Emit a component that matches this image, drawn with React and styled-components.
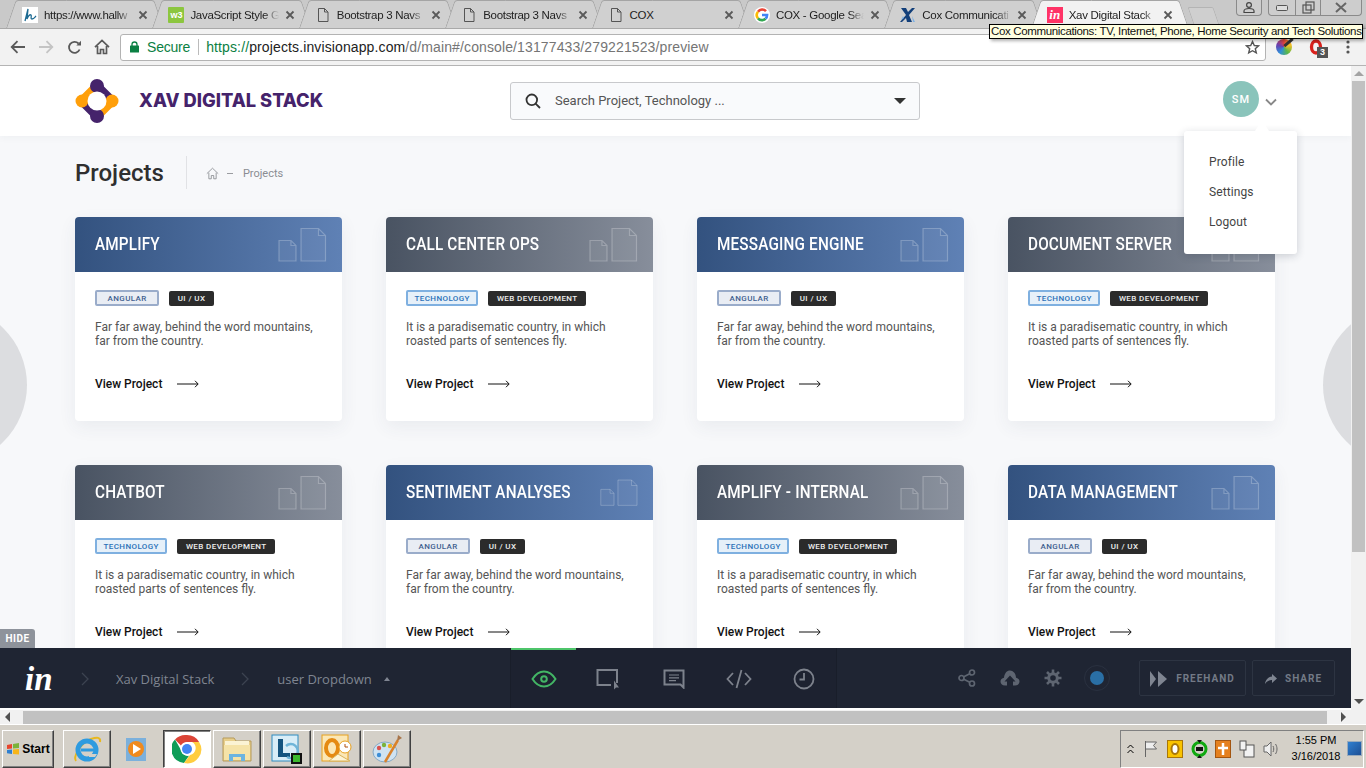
import styled, { createGlobalStyle } from 'styled-components';

const GlobalStyle = createGlobalStyle`
  html, body, #root { margin: 0; padding: 0; height: 100%; }
  body { overflow: hidden; font-family: Roboto, "Liberation Sans", sans-serif; background: #d4d0c8; }
  * { box-sizing: border-box; }
`;

const UI_FONT = `"Liberation Sans", "Open Sans", sans-serif`;

const TABS = [
  { title: 'https://www.hallw', icon: 'hallway' },
  { title: 'JavaScript Style G', icon: 'w3' },
  { title: 'Bootstrap 3 Navs', icon: 'doc' },
  { title: 'Bootstrap 3 Navs', icon: 'doc' },
  { title: 'COX', icon: 'doc', plain: true },
  { title: 'COX - Google Sea', icon: 'google' },
  { title: 'Cox Communicati', icon: 'cox' },
  { title: 'Xav Digital Stack', icon: 'invision', active: true },
];

const ANGULAR = ['ANGULAR', 'UI / UX'];
const TECH = ['TECHNOLOGY', 'WEB DEVELOPMENT'];
const FAR = ['Far far away, behind the word mountains,', 'far from the country.'];
const PARA = ['It is a paradisematic country, in which', 'roasted parts of sentences fly.'];

const CARDS = [
  { title: 'AMPLIFY', blue: true },
  { title: 'CALL CENTER OPS' },
  { title: 'MESSAGING ENGINE', blue: true },
  { title: 'DOCUMENT SERVER' },
  { title: 'CHATBOT' },
  { title: 'SENTIMENT ANALYSES', blue: true },
  { title: 'AMPLIFY - INTERNAL' },
  { title: 'DATA MANAGEMENT', blue: true },
];

const Screen = styled.div`
  width: 1366px;
  height: 768px;
  display: flex;
  flex-direction: column;
  overflow: hidden;
  position: relative;
  background: #d4d0c8;
`;

/* browser chrome */
const TabStrip = styled.div`
  height: 28px;
  flex: none;
  display: flex;
  align-items: flex-end;
  padding-left: 6px;
  background: #c9c9c9;
  position: relative;
  font-family: ${UI_FONT};
`;

const Tab = styled.div`
  width: 158.4px;
  height: 28px;
  margin-right: -12px;
  flex: none;
  position: relative;
  display: flex;
  align-items: center;
  padding: 1px 16px 0 16px;
  isolation: isolate;
  z-index: ${p => (p.$active ? 2 : 1)};

  &::before, &::after {
    content: '';
    position: absolute;
    top: 0;
    bottom: 0;
    width: 55%;
    z-index: -1;
    border-top: 1px solid #a5a5a5;
    background: ${p => (p.$active ? '#f2f2f2' : '#d0d0d0')};
  }
  &::before {
    left: 0;
    border-left: 1px solid #a5a5a5;
    transform: skewX(-19deg);
    transform-origin: bottom left;
    border-top-left-radius: 3px;
  }
  &::after {
    right: 0;
    border-right: 1px solid #a5a5a5;
    transform: skewX(19deg);
    transform-origin: bottom right;
    border-top-right-radius: 3px;
  }
`;

const TabIcon = styled.span`
  width: 16px;
  height: 16px;
  flex: none;
  display: flex;
  align-items: center;
  justify-content: center;
  margin-right: 6px;
`;

const TabTitle = styled.span`
  flex: 1;
  min-width: 0;
  white-space: nowrap;
  font-size: 11.5px;
  letter-spacing: -0.3px;
  color: #222;
  ${p => !p.$plain && `
    -webkit-mask-image: linear-gradient(to right, #000 84%, transparent);
    mask-image: linear-gradient(to right, #000 84%, transparent);
  `}
`;

const TabClose = styled.svg`
  width: 10px;
  height: 10px;
  flex: none;
  margin-left: 6px;
`;

const NewTab = styled.div`
  width: 26px;
  height: 21px;
  margin-left: 14px;
  flex: none;
  background: #cfcfcf;
  border: 1px solid #b4b4b4;
  border-bottom: 0;
  border-radius: 2px 2px 0 0;
  transform: skewX(19deg);
`;

const WindowControls = styled.div`
  position: absolute;
  top: 0;
  right: 4px;
  display: flex;
  gap: 6px;
`;

const WinGroup = styled.div`
  height: 16px;
  display: flex;
  border: 1px solid #8a8a8a;
  border-top: 0;
  border-radius: 0 0 4px 4px;
  background: #cdcdcd;
`;

const WinBtn = styled.div`
  width: ${p => p.$w}px;
  display: flex;
  align-items: center;
  justify-content: center;
  & + & { border-left: 1px solid #8a8a8a; }
`;

const Tooltip = styled.div`
  position: absolute;
  left: 989px;
  top: 24px;
  width: 374px;
  height: 15px;
  z-index: 10;
  background: #ffffe1;
  border: 1px solid #000;
  box-shadow: 2px 2px 3px rgba(0, 0, 0, 0.3);
  font-family: ${UI_FONT};
  font-size: 11.5px;
  letter-spacing: -0.35px;
  line-height: 13px;
  padding-left: 1px;
  color: #111;
  white-space: nowrap;
`;

const Toolbar = styled.div`
  height: 38px;
  flex: none;
  display: flex;
  align-items: center;
  background: #f2f2f2;
  border-top: 1px solid #a9a9a9;
  border-bottom: 1px solid #b4b4b4;
  padding-left: 4px;
  font-family: ${UI_FONT};
`;

const NavBtn = styled.div`
  width: 28px;
  height: 20px;
  flex: none;
  display: flex;
  align-items: center;
  justify-content: center;
`;

const Omnibox = styled.div`
  width: 1146px;
  height: 27px;
  margin-left: 4px;
  flex: none;
  display: flex;
  align-items: center;
  background: #fff;
  border: 1px solid #b3b3b3;
  border-radius: 3px;
  padding: 0 5px 0 9px;
  font-size: 14px;
  white-space: nowrap;
`;

const Secure = styled.span`
  color: #0b8043;
  margin-left: 8px;
  padding-right: 8px;
  border-right: 1px solid #bbb;
  line-height: 16px;
  letter-spacing: -0.2px;
`;

const Url = styled.span`
  margin-left: 7px;
  color: #757575;
  letter-spacing: 0.12px;
  & b { font-weight: 400; color: #0b8043; }
  & i { font-style: normal; color: #222; }
`;

const StarSlot = styled.span`
  margin-left: auto;
  display: flex;
`;

const ExtBtn = styled.div`
  width: 32px;
  margin-left: ${p => p.$ml || 0}px;
  flex: none;
  display: flex;
  justify-content: center;
  position: relative;
`;

const ColorWheel = styled.div`
  width: 16px;
  height: 16px;
  border-radius: 50%;
  background: conic-gradient(#e8443a, #f6c026, #5cb947, #2f8fd8, #6a3fb0, #e8443a);
  position: relative;

  &::after {
    content: '';
    position: absolute;
    left: 7px;
    top: 2px;
    width: 11px;
    height: 3px;
    background: #333;
    transform: rotate(-40deg);
  }
`;

const Badge = styled.span`
  position: absolute;
  left: 17px;
  top: 8px;
  width: 11px;
  height: 11px;
  background: #555;
  color: #fff;
  font: 700 9px/11px ${UI_FONT};
  text-align: center;
`;

/* page */
const Middle = styled.div`
  flex: 1;
  min-height: 0;
  display: flex;
`;

const Viewport = styled.div`
  flex: 1;
  min-width: 0;
  display: flex;
  flex-direction: column;
  position: relative;
  background: #fff;
  padding-bottom: 2px;
`;

const Page = styled.div`
  flex: 1;
  min-height: 0;
  position: relative;
  overflow: hidden;
  background: #f7f8fa;
`;

const Header = styled.header`
  height: 70px;
  display: flex;
  align-items: center;
  padding: 0 74px 0 75px;
  background: #fff;
  box-shadow: 0 1px 8px rgba(40, 50, 70, 0.05);
`;

const Brand = styled.div`
  width: 435px;
  flex: none;
  display: flex;
  align-items: center;
`;

const BrandName = styled.span`
  margin: 0 0 2px 20px;
  font-family: Inter, sans-serif;
  font-weight: 800;
  font-size: 18.3px;
  color: #45236b;
`;

const SearchBox = styled.div`
  width: 410px;
  height: 38px;
  flex: none;
  display: flex;
  align-items: center;
  padding: 0 13px 0 14px;
  background: #f9fafc;
  border: 1px solid #c8c9cc;
  border-radius: 3px;
  font-size: 13px;
  color: #555;
`;

const SearchText = styled.span`
  flex: 1;
  margin: 0 0 2px 14px;
`;

const Caret = styled.span`
  width: 0;
  height: 0;
  border-left: 6px solid transparent;
  border-right: 6px solid transparent;
  border-top: 6px solid #333;
`;

const User = styled.div`
  margin-left: auto;
  display: flex;
  align-items: center;
  gap: 6px;
  & svg { margin-top: 2px; }
`;

const Avatar = styled.div`
  width: 36px;
  height: 36px;
  margin-bottom: 4px;
  border-radius: 50%;
  background: #8ac4bb;
  color: #fff;
  display: flex;
  align-items: center;
  justify-content: center;
  font-size: 11px;
  font-weight: 500;
  letter-spacing: 1px;
`;

const Dropdown = styled.div`
  position: absolute;
  left: 1184px;
  top: 65px;
  width: 113px;
  height: 123px;
  padding: 16px 25px;
  z-index: 5;
  background: #fff;
  border-radius: 3px;
  box-shadow: 0 2px 8px rgba(30, 40, 60, 0.2);

  &::before {
    content: '';
    position: absolute;
    left: 71px;
    top: -11px;
    border-left: 7px solid transparent;
    border-right: 7px solid transparent;
    border-bottom: 11px solid #fff;
  }
`;

const DropItem = styled.div`
  height: 30px;
  line-height: 30px;
  font-size: 12px;
  letter-spacing: 0.1px;
  color: #444;
`;

const Content = styled.main`
  padding: 20px 76px 0 75px;
`;

const TitleRow = styled.div`
  height: 33px;
  margin-bottom: 28px;
  display: flex;
  align-items: center;
`;

const PageTitle = styled.h1`
  margin: 0;
  padding-right: 22px;
  border-right: 1px solid #e1e2e5;
  height: 33px;
  line-height: 34px;
  font-size: 24px;
  font-weight: 500;
  color: #2f2f2f;
`;

const Crumbs = styled.div`
  margin-left: 19px;
  padding-top: 1px;
  display: flex;
  align-items: center;
  font-size: 11px;
  color: #8b8d92;
`;

const CrumbDash = styled.span`
  margin: 0 10px 0 8px;
  width: 6px;
  height: 1px;
  background: #9a9ca0;
`;

const CardGrid = styled.div`
  display: grid;
  grid-template-columns: repeat(4, 267px);
  gap: 44px;
`;

const Card = styled.article`
  height: 204px;
  background: #fff;
  border-radius: 4px;
  overflow: hidden;
  box-shadow: 0 6px 18px rgba(60, 70, 100, 0.07);
`;

const CardHead = styled.div`
  height: 55px;
  display: flex;
  justify-content: space-between;
  padding: 10px 15px 10px 20px;
  background: ${p => (p.$blue
    ? 'linear-gradient(90deg, #33527f, #5f81b5)'
    : 'linear-gradient(90deg, #495362, #878e9b)')};
`;

const CardTitle = styled.h2`
  margin: 0;
  line-height: 34px;
  font-family: Roboto, sans-serif;
  font-size: 18px;
  font-weight: 500;
  color: #fff;
  white-space: nowrap;
  transform: scaleX(0.85);
  transform-origin: left center;
  letter-spacing: 0.2px;
`;

const CardBody = styled.div`
  padding: 18px 20px 0;
`;

const Tags = styled.div`
  display: flex;
  align-items: center;
  gap: 10px;
  height: 16px;
`;

const Tag = styled.span`
  height: ${p => (p.$kind === 'dark' ? 15 : 16)}px;
  padding: 0 ${p => (p.$kind === 'angular' ? 10.5 : p.$kind === 'tech' ? 6.5 : 8.5)}px;
  display: flex;
  align-items: center;
  border-radius: 2px;
  font-size: 8px;
  font-weight: 500;
  letter-spacing: 0.4px;
  ${p => p.$kind === 'angular' && 'background: #e9edf4; border: 2px solid #9aacca; color: #3f5f8f;'}
  ${p => p.$kind === 'tech' && 'background: #e6f0f9; border: 2px solid #7fb0e0; color: #2a70b8;'}
  ${p => p.$kind === 'dark' && 'background: #2b2b2b; color: #eee;'}
`;

const Desc = styled.p`
  margin: 14px 0 0;
  font-size: 12px;
  line-height: 14px;
  color: #555;
`;

const ViewLink = styled.div`
  margin-top: 29px;
  display: flex;
  align-items: center;
  gap: 15px;
  font-size: 12px;
  font-weight: 500;
  color: #111;
`;

const SideCircle = styled.div`
  position: absolute;
  top: 239px;
  ${p => (p.$right ? 'right: -132px;' : 'left: -133px;')}
  width: 160px;
  height: 160px;
  border-radius: 50%;
  background: #dcdde0;
`;

/* invision preview bar */
const PreviewBar = styled.div`
  height: 60px;
  flex: none;
  position: relative;
  display: flex;
  align-items: center;
  background: #1f2533;
  color: #7f8591;
`;

const HideTab = styled.div`
  position: absolute;
  left: 0;
  top: -19px;
  width: 35px;
  height: 19px;
  background: #8e939b;
  border-top-right-radius: 3px;
  color: #fff;
  font-size: 10px;
  font-weight: 700;
  letter-spacing: 0.5px;
  line-height: 20px;
  text-align: center;
`;

const BarLeft = styled.div`
  width: 510px;
  flex: none;
  display: flex;
  align-items: center;
  padding: 2px 0 0 25px;
  font-family: "Open Sans", sans-serif;
  font-size: 13px;
`;

const InLogo = styled.span`
  width: 28px;
  font-family: "Liberation Serif", serif;
  font-style: italic;
  font-weight: 700;
  font-size: 33px;
  line-height: 30px;
  color: #fff;
`;

const Crumb = styled.span`
  margin-left: ${p => p.$ml}px;
  white-space: nowrap;
`;

const BarChevron = styled.svg`
  margin-left: ${p => p.$ml}px;
  flex: none;
`;

const BarCaret = styled.span`
  margin-left: 12px;
  width: 0;
  height: 0;
  border-left: 3.5px solid transparent;
  border-right: 3.5px solid transparent;
  border-bottom: 4px solid #7f8591;
`;

const BarCenter = styled.div`
  width: 327px;
  height: 60px;
  flex: none;
  display: flex;
  background: #1d2230;
  border-left: 1px solid #191e2a;
  border-right: 1px solid #191e2a;
`;

const ModeBtn = styled.div`
  width: 65px;
  height: 60px;
  display: flex;
  align-items: center;
  justify-content: center;
  border-top: 2px solid ${p => (p.$on ? '#4ec46a' : 'transparent')};
`;

const BarRight = styled.div`
  flex: 1;
  display: flex;
  align-items: center;
  padding-left: 108px;
`;

const RightIcon = styled.div`
  width: 43px;
  display: flex;
  justify-content: center;
`;

const Presence = styled.div`
  width: 26px;
  height: 26px;
  margin: 0 29px 0 10px;
  border-radius: 50%;
  border: 1px solid #2a3140;
  display: flex;
  align-items: center;
  justify-content: center;

  &::after {
    content: '';
    width: 14px;
    height: 14px;
    border-radius: 50%;
    background: #2a6fa5;
  }
`;

const BarButton = styled.div`
  width: ${p => p.$w}px;
  height: 36px;
  margin-right: 6px;
  padding-top: 1px;
  flex: none;
  display: flex;
  align-items: center;
  justify-content: center;
  gap: 8px;
  border: 1px solid #2d3442;
  border-radius: 2px;
  font-size: 10px;
  font-weight: 700;
  letter-spacing: 1px;
  color: #737a86;
`;

/* scrollbars */
const VScroll = styled.div`
  width: 15px;
  flex: none;
  display: flex;
  flex-direction: column;
  align-items: center;
  background: #f1f1f1;
  padding-top: 5px;
`;

const VThumb = styled.div`
  width: 13px;
  height: 471px;
  margin-top: 5px;
  background: #c1c1c1;
`;

const VArrow = styled.span`
  width: 0;
  height: 0;
  border-left: 5px solid transparent;
  border-right: 5px solid transparent;
  ${p => (p.$down ? 'border-top: 5px solid #505050; margin-top: auto; margin-bottom: 6px;' : 'border-bottom: 5px solid #a3a3a3;')}
`;

const HScroll = styled.div`
  height: 14px;
  flex: none;
  display: flex;
  align-items: center;
  background: #f1f1f1;
  padding: 0 20px 0 5px;
`;

const HThumb = styled.div`
  flex: 1;
  height: 13px;
  margin: 0 14px 0 13px;
  background: #c1c1c1;
`;

const HArrow = styled.span`
  width: 0;
  height: 0;
  border-top: 5px solid transparent;
  border-bottom: 5px solid transparent;
  ${p => (p.$right ? 'border-left: 5px solid #505050;' : 'border-right: 5px solid #505050;')}
`;

/* windows taskbar */
const Taskbar = styled.div`
  height: 44px;
  flex: none;
  display: flex;
  align-items: center;
  padding: 4px 2px 0;
  background: #d4d0c8;
  border-top: 1px solid #fff;
  font-family: ${UI_FONT};
`;

const raised = `
  border: 1px solid;
  border-color: #fff #404040 #404040 #fff;
  box-shadow: inset -1px -1px 0 #808080;
`;

const StartBtn = styled.div`
  width: 52px;
  height: 38px;
  flex: none;
  margin-right: 9px;
  display: flex;
  align-items: center;
  justify-content: center;
  gap: 2px;
  ${raised}
  font: 700 12px "Liberation Sans", sans-serif;
  color: #000;
`;

const TaskBtn = styled.div`
  width: 48px;
  height: 38px;
  flex: none;
  margin-right: 2px;
  display: flex;
  align-items: center;
  justify-content: center;
  ${p => (p.$flat ? '' : raised)}
  ${p => p.$pressed && `
    border-color: #404040 #fff #fff #404040;
    box-shadow: inset 1px 1px 0 #808080;
    background: #fff;
  `}
`;

const Tray = styled.div`
  width: 244px;
  height: 38px;
  margin-left: auto;
  flex: none;
  display: flex;
  align-items: center;
  border: 1px solid;
  border-color: #808080 #fff #fff #808080;
`;

const TraySlot = styled.div`
  width: ${p => p.$w || 24}px;
  flex: none;
  display: flex;
  justify-content: center;
`;

const Clock = styled.div`
  width: 56px;
  margin: 0 3px 2px 5px;
  flex: none;
  text-align: center;
  font-size: 11px;
  line-height: 16px;
  color: #000;
`;

const DesktopBtn = styled.div`
  width: 15px;
  height: 15px;
  background: linear-gradient(135deg, #2f7fd0, #1d4f94);
  border: 1px solid #9ab;
`;

const W3Fav = styled.span`
  width: 16px;
  height: 16px;
  overflow: hidden;
  background: #8cc63f;
  border-radius: 1px;
  color: #fff;
  font: 700 9px/16px ${UI_FONT};
  text-align: center;
`;

const InvisionFav = styled.span`
  width: 16px;
  height: 16px;
  background: #ff3366;
  color: #fff;
  font: italic 700 13px/15px "Liberation Serif", serif;
  text-align: center;
`;

/* icons */
const Logo = () => (
  <svg width="44" height="44" viewBox="0 0 44 44">
    <g strokeWidth="9" strokeLinecap="round">
      <line x1="22" y1="7" x2="37" y2="22" stroke="#45236b" />
      <line x1="37" y1="22" x2="22" y2="37" stroke="#ff9f0a" />
      <line x1="22" y1="37" x2="7" y2="22" stroke="#45236b" />
      <line x1="7" y1="22" x2="22" y2="7" stroke="#ff9f0a" />
    </g>
    <circle cx="7" cy="22" r="6.500" fill="#ff9f0a" />
    <circle cx="37" cy="22" r="6.500" fill="#ff9f0a" />
    <circle cx="22" cy="7" r="7" fill="#45236b" />
    <circle cx="22" cy="37" r="7" fill="#45236b" />
    <circle cx="22" cy="22" r="9.500" fill="#fff" />
  </svg>
);

const DocOutline = ({ color = '#555' }) => (
  <svg width="14" height="16" viewBox="0 0 14 16" fill="none" stroke={color}>
    <path d="M2.500 1.500h6l3.500 3.500v9.500h-9.500z M8.500 1.500v3.500h3.500" />
  </svg>
);

const Favicon = ({ kind }) => {
  if (kind === 'doc') return <DocOutline />;
  if (kind === 'hallway') {
    return (
      <svg width="16" height="16" viewBox="0 0 16 16">
        <rect width="16" height="16" fill="#fff" />
        <path d="M3 14 6 2 5 12c1-3 3-5 4-4s-1 4 1 4 3-2 4-3" fill="none" stroke="#1d6a92" strokeWidth="1.300" />
      </svg>
    );
  }
  if (kind === 'w3') return <W3Fav>w3</W3Fav>;
  if (kind === 'google') {
    return (
      <svg width="16" height="16" viewBox="0 0 16 16" fill="none" strokeWidth="2.600">
        <circle cx="8" cy="8" r="8" fill="#fff" />
        <path d="M12 4.200A5.200 5.200 0 0 0 4 4.700" stroke="#ea4335" />
        <path d="M4 4.700a5.200 5.200 0 0 0 0 6.600" stroke="#fbbc05" />
        <path d="M4 11.300a5.200 5.200 0 0 0 7.600.4" stroke="#34a853" />
        <path d="M11.600 11.700c1-1 1.500-2.200 1.500-3.700H8" stroke="#4285f4" />
      </svg>
    );
  }
  if (kind === 'cox') {
    return (
      <svg width="16" height="16" viewBox="0 0 16 16">
        <path d="M1 1h5l2 4 4-4h3L9 8l3 7H7L6 11l-4 4H0l6-7z" fill="#123f7a" />
        <path d="M12 9l3 6h-2z M3 9 1 13l3-2z" fill="#7fb2e5" />
      </svg>
    );
  }
  return <InvisionFav>in</InvisionFav>;
};

const CloseX = () => (
  <TabClose viewBox="0 0 10 10">
    <path d="M1.500 1.500l7 7M8.500 1.500l-7 7" stroke="#5a5a5a" strokeWidth="1.800" />
  </TabClose>
);

const NavArrow = ({ color, d = 'M15 7H2M7.500 1.200 1.700 7l5.800 5.800' }) => (
  <svg width="16" height="14" viewBox="0 0 16 14" fill="none" stroke={color} strokeWidth="1.800">
    <path d={d} />
  </svg>
);

const Reload = () => (
  <svg width="15" height="15" viewBox="0 0 15 15" fill="none" stroke="#5a5a5a" strokeWidth="1.800">
    <path d="M12.600 9.500A5.500 5.500 0 1 1 11.500 3.500" />
    <path d="M14 0.800v4.700H9.300z" fill="#5a5a5a" stroke="none" />
  </svg>
);

const HomeIcon = ({ size = 16, color = '#5a5a5a', w = 1.700 }) => (
  <svg width={size} height={size} viewBox="0 0 16 16" fill="none" stroke={color} strokeWidth={w}>
    <path d="M1 8.200 8 1.500l7 6.700M3.500 7v7.500h3v-4h3v4h3V7" />
  </svg>
);

const LockIcon = () => (
  <svg width="9" height="12" viewBox="0 0 9 12">
    <path d="M2 5V3.500a2.500 2.500 0 0 1 5 0V5" fill="none" stroke="#0b8043" strokeWidth="1.300" />
    <rect y="4.500" width="9" height="7" rx="0.500" fill="#0b8043" />
  </svg>
);

const StarIcon = () => (
  <svg width="15" height="15" viewBox="0 0 15 15" fill="none" stroke="#555" strokeWidth="1.400">
    <path d="M7.500 1.500l1.800 4 4.200.4-3.200 2.800 1 4.200-3.800-2.200-3.800 2.200 1-4.200L1.500 5.900l4.200-.4z" />
  </svg>
);

const OperaIcon = () => (
  <svg width="14" height="16" viewBox="0 0 14 16" fill="none" stroke="#d8211c" strokeWidth="3.300">
    <ellipse cx="7" cy="8" rx="4.500" ry="6" />
  </svg>
);

const Dots = () => (
  <svg width="4" height="14" viewBox="0 0 4 14" fill="#555">
    <circle cx="2" cy="2" r="1.600" />
    <circle cx="2" cy="7" r="1.600" />
    <circle cx="2" cy="12" r="1.600" />
  </svg>
);

const SearchIcon = () => (
  <svg width="16" height="16" viewBox="0 0 16 16" fill="none" stroke="#333" strokeWidth="1.800">
    <circle cx="6.800" cy="6.800" r="5.300" />
    <path d="M10.600 10.600 15 15" />
  </svg>
);

const ChevDown = () => (
  <svg width="12" height="8" viewBox="0 0 12 8" fill="none" stroke="#888" strokeWidth="1.800">
    <path d="M1 1.500l5 5 5-5" />
  </svg>
);

const ArrowLong = () => (
  <svg width="22" height="8" viewBox="0 0 22 8" fill="none" stroke="#111">
    <path d="M0 4h21M18 .8 21.200 4 18 7.200" />
  </svg>
);

const CardDocs = () => (
  <svg width="49" height="35" viewBox="0 0 49 35" fill="rgba(255,255,255,0.05)" stroke="rgba(255,255,255,0.24)" strokeWidth="1.200">
    <path d="M1 13.500h12l5 5v15.500H1z M13 13.500v5h5" />
    <path d="M23 1.500h17.500l7 7V34H23z M40.500 1.500v7h7" />
  </svg>
);

const Eye = () => (
  <svg width="26" height="18" viewBox="0 0 26 18" fill="none" stroke="#43b565" strokeWidth="2">
    <path d="M1.500 9C5 3.500 9 1.500 13 1.500S21 3.500 24.500 9C21 14.500 17 16.500 13 16.500S5 14.500 1.500 9z" />
    <circle cx="13" cy="9" r="2.800" />
  </svg>
);

const ScreenIcon = () => (
  <svg width="26" height="22" viewBox="0 0 26 22" fill="none" stroke="#7d828c" strokeWidth="2">
    <path d="M21 15V2H1.500v15H15" />
    <path d="M18 12.500v9l2-2 3 .0z" fill="#7d828c" stroke="none" />
  </svg>
);

const CommentIcon = () => (
  <svg width="22" height="20" viewBox="0 0 22 20" fill="none" stroke="#7d828c" strokeWidth="2">
    <path d="M1.500 1.500h19v17l-3-3h-16z" />
    <path d="M6 6h10M6 8.800h10M6 11.600h7" strokeWidth="1.200" />
  </svg>
);

const CodeIcon = () => (
  <svg width="26" height="20" viewBox="0 0 26 20" fill="none" stroke="#7d828c" strokeWidth="1.800">
    <path d="M7 4 1.500 10 7 16M19 4l5.500 6L19 16M15.500 1l-5 18" />
  </svg>
);

const ClockIcon = () => (
  <svg width="22" height="22" viewBox="0 0 22 22" fill="none" stroke="#7d828c" strokeWidth="1.800">
    <circle cx="11" cy="11" r="9.500" />
    <path d="M11 5v6.500H6.500" />
  </svg>
);

const ShareNodes = () => (
  <svg width="18" height="18" viewBox="0 0 18 18" fill="none" stroke="#5e6571" strokeWidth="1.700">
    <circle cx="3.500" cy="9" r="2.500" />
    <circle cx="14" cy="3.500" r="2.500" />
    <circle cx="14" cy="14.500" r="2.500" />
    <path d="M5.800 7.800 11.700 4.700M5.800 10.200l5.900 3.100" />
  </svg>
);

const CloudIcon = () => (
  <svg width="20" height="18" viewBox="0 0 20 18">
    <path d="M5 16.500C2 16.500 .5 14.500.5 12.500S2 9 4 8.800C4.500 4 7 1.500 10 1.500s6 3 6 7.300c2 .2 3.500 1.700 3.500 3.700s-1.500 4-4.500 4h-2v-4h2.500L10 6.500 4.500 12.500H7v4z" fill="#5e6571" />
  </svg>
);

const GearIcon = () => (
  <svg width="18" height="18" viewBox="0 0 18 18" fill="none" stroke="#5e6571">
    <circle cx="9" cy="9" r="4.300" strokeWidth="3" />
    <path d="M9 .5v3.500M9 14v3.500M.5 9H4M14 9h3.500M3 3l2.400 2.400M12.600 12.600 15 15M15 3l-2.400 2.400M5.400 12.600 3 15" strokeWidth="2.600" />
  </svg>
);

const FreehandIcon = () => (
  <svg width="18" height="16" viewBox="0 0 18 16" fill="#7f8591">
    <path d="M0 0l6 8-6 8zM8 0l9 8-9 8z" />
  </svg>
);

const ShareArrow = () => (
  <svg width="12" height="10" viewBox="0 0 12 10" fill="#7f8591">
    <path d="M7 0l5 4.500L7 9V6C4 6 2 7 0 10c.5-4 3-7 7-7.500z" />
  </svg>
);

const StartFlag = () => (
  <svg width="14" height="14" viewBox="0 0 14 14">
    <path d="M1 3l5-1v4.500L1 7z" fill="#e8452c" />
    <path d="M7 2l6-1v5l-6 .5z" fill="#7bb33a" />
    <path d="M1 8l5-.5V12l-5-.8z" fill="#2f7fd0" />
    <path d="M7 7.500l6-.5v5.500L7 12z" fill="#f7b519" />
  </svg>
);

const IeIcon = () => (
  <svg width="30" height="30" viewBox="0 0 30 30" fill="none">
    <path d="M4 27C1 23 8 9 19 5c6-2 10-2 9 3" stroke="#e8b81e" strokeWidth="2" />
    <circle cx="15" cy="16" r="9" stroke="#2e9be0" strokeWidth="5" />
    <path d="M9 16h13" stroke="#2e9be0" strokeWidth="3" />
    <path d="M17 20h8l-2 3h-6z" fill="#d4d0c8" />
  </svg>
);

const MediaIcon = () => (
  <svg width="30" height="30" viewBox="0 0 30 30">
    <rect x="4" y="4" width="20" height="23" fill="#7bb0dc" />
    <circle cx="14" cy="15" r="8" fill="#f08a1d" />
    <path d="M11 10l8 5-8 5z" fill="#fff" />
  </svg>
);

const ChromeIcon = () => (
  <svg width="30" height="30" viewBox="0 0 30 30" fill="none">
    <path d="M15 1a14 14 0 0 1 12.100 7H15a7 7 0 0 0-6.100 3.500L3 5.500A14 14 0 0 1 15 1z" fill="#db4437" />
    <path d="M3 5.500l6 10.500a7 7 0 0 0 8 5.800L12 29A14 14 0 0 1 3 5.500z" fill="#0f9d58" />
    <path d="M27.100 8A14 14 0 0 1 12 29l6-8a7 7 0 0 0 2-13z" fill="#ffcd40" />
    <circle cx="15" cy="15" r="6.500" fill="#fff" />
    <circle cx="15" cy="15" r="5" fill="#4285f4" />
  </svg>
);

const FolderIcon = () => (
  <svg width="32" height="28" viewBox="0 0 32 28">
    <path d="M2 3h11l2 3h15v20H2z" fill="#e8cf8b" stroke="#b59a5a" />
    <rect x="4" y="6" width="24" height="4" fill="#fbf3d4" />
    <rect x="3" y="10" width="26" height="15" fill="#f5e3a8" />
    <path d="M8 26V19h16v7h-4v-4h-8v4z" fill="#6cb4e0" />
  </svg>
);

const LyncIcon = () => (
  <svg width="32" height="30" viewBox="0 0 32 30">
    <rect x="1" y="1" width="26" height="26" fill="#d8edf7" stroke="#2f8cc0" />
    <path d="M7 5h5v14h7v4H7z" fill="#14547f" />
    <path d="M15 12a7 7 0 1 1 1 11" fill="none" stroke="#6fb5d8" strokeWidth="2.500" />
    <rect x="20" y="19" width="11" height="11" fill="#111" />
    <rect x="22" y="21" width="7" height="7" fill="#3cba2e" />
  </svg>
);

const OutlookIcon = () => (
  <svg width="32" height="30" viewBox="0 0 32 30">
    <rect x="1" y="1" width="26" height="26" fill="#fbe7b5" stroke="#e8a11f" />
    <ellipse cx="11" cy="14" rx="6" ry="8" fill="none" stroke="#e58a12" strokeWidth="4" />
    <circle cx="24" cy="13" r="6" fill="#fff" stroke="#e8a11f" />
    <path d="M24 10v3h3" stroke="#b0500f" fill="none" />
    <path d="M8 27l9-7 12 7z" fill="#fdf4d6" stroke="#d9b35a" />
  </svg>
);

const PaintIcon = () => (
  <svg width="32" height="30" viewBox="0 0 32 30">
    <ellipse cx="14" cy="18" rx="12" ry="10" fill="#cfe3f2" stroke="#86a9c6" />
    <circle cx="8" cy="14" r="2.200" fill="#d9534f" />
    <circle cx="13" cy="11" r="2.200" fill="#7bb33a" />
    <circle cx="19" cy="12" r="2.200" fill="#f0ad1e" />
    <circle cx="8" cy="21" r="2.200" fill="#3c8ed6" />
    <path d="M14 28 27 6" stroke="#d9822b" strokeWidth="2.500" />
    <path d="M26 7l1-6 4 3z" fill="#a8754a" />
  </svg>
);

const TrayIcons = [
  <svg key="up" width="7" height="10" viewBox="0 0 7 10" fill="none" stroke="#000"><path d="M.5 4l3-3 3 3M.5 9l3-3 3 3" /></svg>,
  <svg key="flag" width="14" height="18" viewBox="0 0 14 18" fill="#eee" stroke="#666"><path d="M1.500 1v16M1.500 2h11l-3 3.500 3 3.500h-11" /></svg>,
  <svg key="opera" width="16" height="18" viewBox="0 0 16 18"><rect x=".5" y=".5" width="15" height="17" fill="#f9c300" stroke="#a8760a" /><ellipse cx="8" cy="9" rx="3.500" ry="5" fill="#fff" stroke="#a8760a" strokeWidth="2" /></svg>,
  <svg key="sync" width="17" height="18" viewBox="0 0 17 18" fill="none"><circle cx="8.500" cy="9" r="6.500" stroke="#11a911" strokeWidth="3" /><rect x="5" y="7" width="7" height="4" fill="#111" /><path d="M6 0h5L8.500 3zM6 18h5l-2.500-3z" fill="#111" /></svg>,
  <svg key="orange" width="16" height="18" viewBox="0 0 16 18"><rect x=".5" y=".5" width="15" height="17" fill="#e5801e" stroke="#a35510" /><path d="M8 3v12M3 8h10" stroke="#fff" strokeWidth="2.500" /></svg>,
  <svg key="net" width="16" height="18" viewBox="0 0 16 18" fill="#f2f2f2" stroke="#555"><rect x="5" y="5" width="10" height="12" /><rect x="1" y="1" width="6" height="9" /></svg>,
  <svg key="vol" width="16" height="18" viewBox="0 0 16 18" fill="#eee" stroke="#666"><path d="M1 6h3l4-4v14l-4-4H1z" /><path d="M10 6c1 2 1 4 0 6M12.500 4c2 3 2 7 0 10" fill="none" /></svg>,
];

const TaskIcons = [
  { el: <IeIcon /> },
  { el: <MediaIcon />, flat: true },
  { el: <ChromeIcon />, pressed: true },
  { el: <FolderIcon /> },
  { el: <LyncIcon /> },
  { el: <OutlookIcon /> },
  { el: <PaintIcon /> },
];

const ProjectCard = ({ title, blue }) => (
  <Card>
    <CardHead $blue={blue}>
      <CardTitle>{title}</CardTitle>
      <CardDocs />
    </CardHead>
    <CardBody>
      <Tags>
        <Tag $kind={blue ? 'angular' : 'tech'}>{(blue ? ANGULAR : TECH)[0]}</Tag>
        <Tag $kind="dark">{(blue ? ANGULAR : TECH)[1]}</Tag>
      </Tags>
      <Desc>
        {(blue ? FAR : PARA)[0]}<br />{(blue ? FAR : PARA)[1]}
      </Desc>
      <ViewLink>View Project <ArrowLong /></ViewLink>
    </CardBody>
  </Card>
);

const TabChevron = ({ ml }) => (
  <BarChevron $ml={ml} width="8" height="14" viewBox="0 0 8 14" fill="none" stroke="#3c4350" strokeWidth="1.300">
    <path d="M1 1l6 6-6 6" />
  </BarChevron>
);

export default function App() {
  return (
    <Screen>
      <GlobalStyle />
      <TabStrip>
        {TABS.map((t, i) => (
          <Tab key={i} $active={t.active}>
            <TabIcon><Favicon kind={t.icon} /></TabIcon>
            <TabTitle $plain={t.plain}>{t.title}</TabTitle>
            <CloseX />
          </Tab>
        ))}
        <NewTab />
        <WindowControls>
          <WinGroup>
            <WinBtn $w={24}>
              <svg width="12" height="11" viewBox="0 0 12 11" fill="none" stroke="#444" strokeWidth="1.200"><circle cx="6" cy="3" r="2.400" /><path d="M1 10.500V9c0-1.500 2-2.500 5-2.500S11 7.500 11 9v1.500z" /></svg>
            </WinBtn>
          </WinGroup>
          <WinGroup>
            <WinBtn $w={26}>
              <svg width="12" height="6" viewBox="0 0 12 6" fill="#ddd" stroke="#555"><rect x=".5" y=".5" width="11" height="5" rx="1" /></svg>
            </WinBtn>
            <WinBtn $w={25}>
              <svg width="13" height="13" viewBox="0 0 13 13" fill="none" stroke="#555" strokeWidth="1.200"><rect x="1" y="4" width="8" height="8" /><rect x="4" y="1" width="8" height="8" /></svg>
            </WinBtn>
            <WinBtn $w={41}>
              <svg width="14" height="11" viewBox="0 0 14 11" stroke="#666" strokeWidth="2"><path d="M2 1l10 9M12 1 2 10" /></svg>
            </WinBtn>
          </WinGroup>
        </WindowControls>
      </TabStrip>
      <Tooltip>Cox Communications: TV, Internet, Phone, Home Security and Tech Solutions</Tooltip>

      <Toolbar>
        <NavBtn><NavArrow color="#5a5a5a" /></NavBtn>
        <NavBtn><NavArrow color="#c4c4c4" d="M1 7h13M8.500 1.200 14.300 7l-5.800 5.800" /></NavBtn>
        <NavBtn><Reload /></NavBtn>
        <NavBtn><HomeIcon /></NavBtn>
        <Omnibox>
          <LockIcon />
          <Secure>Secure</Secure>
          <Url><b>https://</b><i>projects.invisionapp.com</i>/d/main#/console/13177433/279221523/preview</Url>
          <StarSlot><StarIcon /></StarSlot>
        </Omnibox>
        <ExtBtn $ml={2}><ColorWheel /></ExtBtn>
        <ExtBtn><OperaIcon /><Badge>3</Badge></ExtBtn>
        <ExtBtn><Dots /></ExtBtn>
      </Toolbar>

      <Middle>
        <Viewport>
          <Page>
            <Header>
              <Brand><Logo /><BrandName>XAV DIGITAL STACK</BrandName></Brand>
              <SearchBox>
                <SearchIcon />
                <SearchText>Search Project, Technology ...</SearchText>
                <Caret />
              </SearchBox>
              <User><Avatar>SM</Avatar><ChevDown /></User>
            </Header>
            <SideCircle />
            <SideCircle $right />
            <Content>
              <TitleRow>
                <PageTitle>Projects</PageTitle>
                <Crumbs>
                  <HomeIcon size={13} color="#85878c" w={1} />
                  <CrumbDash />
                  Projects
                </Crumbs>
              </TitleRow>
              <CardGrid>
                {CARDS.map(c => <ProjectCard key={c.title} {...c} />)}
              </CardGrid>
            </Content>
            <Dropdown>
              <DropItem>Profile</DropItem>
              <DropItem>Settings</DropItem>
              <DropItem>Logout</DropItem>
            </Dropdown>
          </Page>
          <PreviewBar>
            <HideTab>HIDE</HideTab>
            <BarLeft>
              <InLogo>in</InLogo>
              <TabChevron ml={28} />
              <Crumb $ml={27}>Xav Digital Stack</Crumb>
              <TabChevron ml={27} />
              <Crumb $ml={28}>user Dropdown</Crumb>
              <BarCaret />
            </BarLeft>
            <BarCenter>
              <ModeBtn $on><Eye /></ModeBtn>
              <ModeBtn><ScreenIcon /></ModeBtn>
              <ModeBtn><CommentIcon /></ModeBtn>
              <ModeBtn><CodeIcon /></ModeBtn>
              <ModeBtn><ClockIcon /></ModeBtn>
            </BarCenter>
            <BarRight>
              <RightIcon><ShareNodes /></RightIcon>
              <RightIcon><CloudIcon /></RightIcon>
              <RightIcon><GearIcon /></RightIcon>
              <Presence />
              <BarButton $w={107}><FreehandIcon />FREEHAND</BarButton>
              <BarButton $w={83}><ShareArrow />SHARE</BarButton>
            </BarRight>
          </PreviewBar>
        </Viewport>
        <VScroll>
          <VArrow />
          <VThumb />
          <VArrow $down />
        </VScroll>
      </Middle>

      <HScroll>
        <HArrow />
        <HThumb />
        <HArrow $right />
      </HScroll>

      <Taskbar>
        <StartBtn><StartFlag />Start</StartBtn>
        {TaskIcons.map((t, i) => (
          <TaskBtn key={i} $flat={t.flat} $pressed={t.pressed}>{t.el}</TaskBtn>
        ))}
        <Tray>
          <TraySlot $w={18}>{TrayIcons[0]}</TraySlot>
          {TrayIcons.slice(1).map(ic => <TraySlot key={ic.key}>{ic}</TraySlot>)}
          <Clock>1:55 PM<br />3/16/2018</Clock>
          <DesktopBtn />
        </Tray>
      </Taskbar>
    </Screen>
  );
}
